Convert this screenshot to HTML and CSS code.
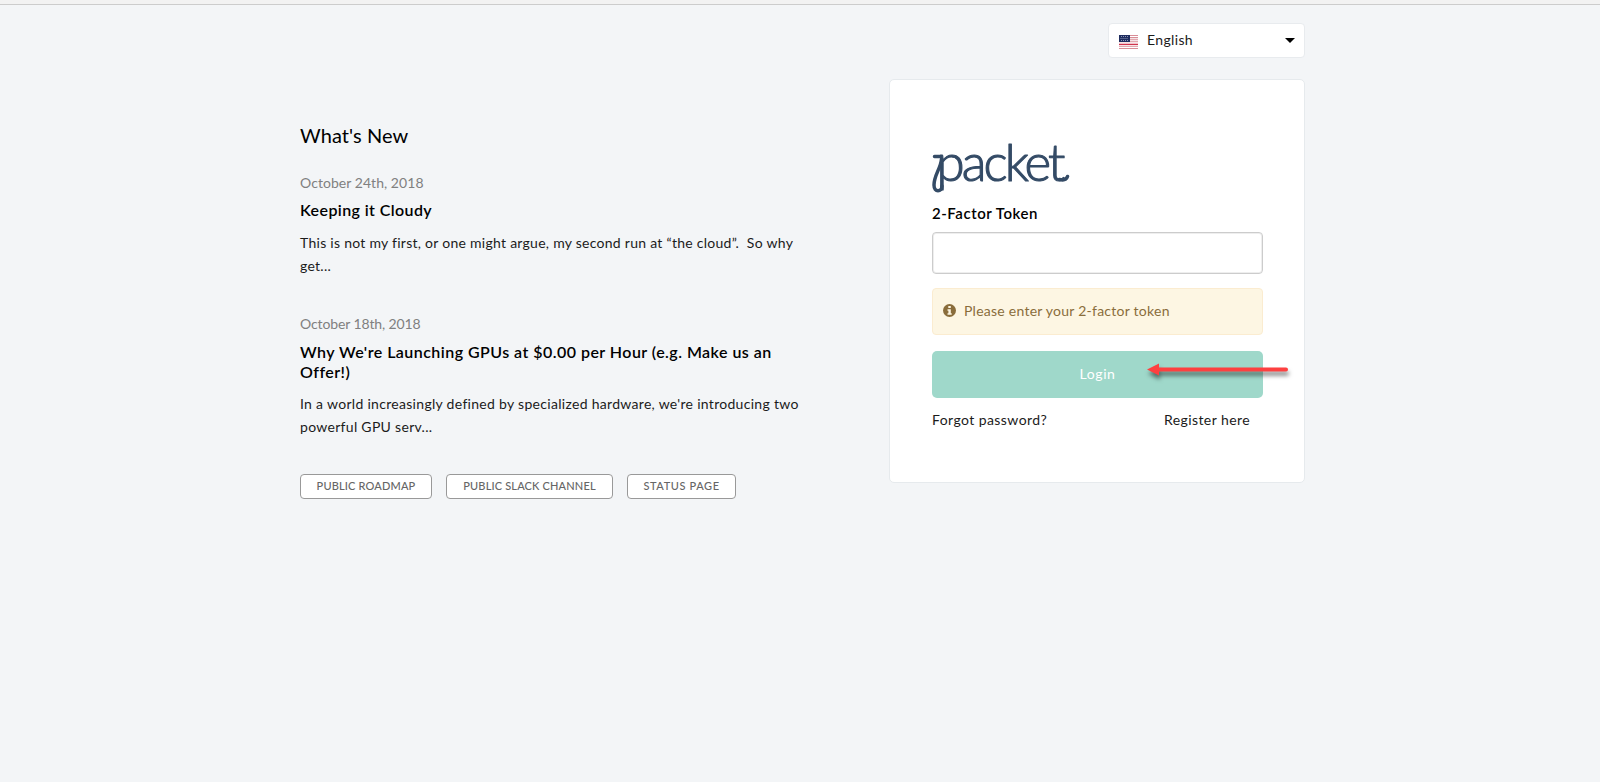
FILE: index.html
```html
<!DOCTYPE html>
<html lang="en">
<head>
<meta charset="utf-8">
<title>Packet - Login</title>
<link rel="stylesheet" href="styles.css">
</head>
<body>
<div class="topbar"></div>
<div class="page">
  <section class="news">
    <h1 class="news-title">What's New</h1>
    <article class="post">
      <div class="post-date">October 24th, 2018</div>
      <h2 class="post-title">Keeping it Cloudy</h2>
      <p class="post-text">This is not my first, or one might argue, my second run at “the cloud”.&nbsp; So why<br>get...</p>
    </article>
    <article class="post second">
      <div class="post-date">October 18th, 2018</div>
      <h2 class="post-title">Why We're Launching GPUs at $0.00 per Hour (e.g. Make us an<br>Offer!)</h2>
      <p class="post-text">In a world increasingly defined by specialized hardware, we're introducing two<br>powerful GPU serv...</p>
    </article>
    <nav class="links">
      <a class="pill roadmap">PUBLIC ROADMAP</a>
      <a class="pill slack">PUBLIC SLACK CHANNEL</a>
      <a class="pill status">STATUS PAGE</a>
    </nav>
  </section>
  <section class="side">
    <div class="language">
      <svg class="flag" viewBox="0 0 19 14">
        <rect width="19" height="14" fill="#fff"/>
        <path d="M0 .5h19M0 2.6h19M0 4.7h19M0 6.8h19M0 11.3h19M0 13.5h19" stroke="#d98d97" stroke-width="1.1"/>
        <path d="M0 9.3h19" stroke="#c8102e" stroke-width="1.1"/>
        <rect width="11" height="7" fill="#1f2d5f"/>
        <path d="M2 1.5h7M1.5 3.5h8M2 5.5h7" stroke="#8b94b5" stroke-dasharray="1 1"/>
      </svg>
      <span class="language-name">English</span>
      <svg class="caret" viewBox="0 0 10 5"><path d="M0 0h10L5 5z"/></svg>
    </div>
    <form class="card">
      <svg class="logo" viewBox="0 0 140 54" role="img" aria-label="packet">
        <text class="logo-text" x="4.500" y="42" textLength="129" lengthAdjust="spacing">packet</text>
        <path class="swash" d="M2.500 17.500h6M9.500 20C9 29 2 36 2 46c0 8 8 7 8 1M127.500 40.500c4 1 7 0 8-3"/>
      </svg>
      <label class="label" for="token">2-Factor Token</label>
      <input class="token" id="token" type="text">
      <div class="alert">
        <svg class="info" viewBox="0 0 13 13"><circle cx="6.500" cy="6.500" r="6.500" fill="#8a6d3b"/><path d="M5.300 2h2.500v2H5.300zM4.500 5.200h3.300v4h.9v1.600H4.500V9.200h.9V6.800h-.9z" fill="#fdf6e3"/></svg>
        <span class="alert-text">Please enter your 2-factor token</span>
      </div>
      <div class="login"><span class="login-text">Login</span>
        <svg class="arrow" viewBox="0 0 150 24"><path d="M4 9.500 16 3.500v4h127a2 2 0 0 1 0 4H16v4z" fill="#fd4040"/></svg>
      </div>
      <div class="actions"><a class="forgot">Forgot password?</a><a class="register">Register here</a></div>
    </form>
  </section>
</div>
</body>
</html>
```
FILE: styles.css
```css
* { box-sizing: border-box; }
body { margin: 0; height: 782px; overflow: hidden; background: #f3f5f7; color: #1b1b1b; font: 14px/20px Lato, sans-serif; white-space: nowrap; }
.topbar { height: 5px; background: #f2f2f2; border-bottom: 1px solid #ccc; }
.page { display: flex; justify-content: space-between; width: 1005px; margin-left: 300px; }
.news { width: 515px; padding-top: 116px; }
h1, h2, p { margin: 0; }
.news-title { font-size: 20px; line-height: 28px; font-weight: 400; color: #000; letter-spacing: .08px; }
.post-date { margin-top: 24px; line-height: 20px; color: #808080; font-size: 14px; letter-spacing: .05px; }
.post-title { margin-top: 7px; font-size: 16px; line-height: 20px; font-weight: 600; color: #000; letter-spacing: .4px; }
.post-text { margin-top: 11px; font-size: 14px; line-height: 23px; letter-spacing: .27px; }
.second .post-date { margin-top: 37px; letter-spacing: -.12px; }
.second .post-title { margin-top: 8px; letter-spacing: .46px; }
.second .post-text { margin-top: 10px; letter-spacing: .3px; }
.links { display: flex; gap: 14px; margin-top: 36px; }
.pill { display: flex; align-items: center; justify-content: center; height: 25px; padding-bottom: 1px; background: #fff; border: 1px solid #999; border-radius: 4px; color: #666; font-size: 11px; font-weight: 500; letter-spacing: .16px; }
.roadmap { width: 132px; }
.slack { width: 167px; }
.status { width: 109px; letter-spacing: .6px; }
.side { display: flex; flex-direction: column; align-items: flex-end; width: 416px; padding-top: 18px; }
.language { display: flex; align-items: center; width: 197px; height: 35px; padding: 0 11px 0 10px; background: #fff; border: 1px solid #e8ebee; border-radius: 4px; }
.flag { width: 19px; height: 14px; margin-top: 2px; }
.language-name { margin: -2px 0 0 9px; flex: 1; letter-spacing: .35px; }
.caret { width: 10px; height: 5px; margin-right: -2px; }
.card { width: 416px; height: 404px; margin-top: 21px; padding: 59px 41px 0 42px; background: #fff; border: 1px solid #e6eaed; border-radius: 5px; }
.logo { display: block; width: 140px; height: 54px; overflow: visible; }
.logo-text { font-family: Lato, sans-serif; font-weight: 300; font-size: 51px; fill: #344b66; stroke: #344b66; stroke-width: 1.1px; stroke-linejoin: round; }
.swash { fill: none; stroke: #344b66; stroke-width: 3.500; stroke-linecap: round; }
.label { display: block; margin-top: 10px; font-size: 15px; line-height: 20px; font-weight: 600; color: #000; letter-spacing: .54px; }
.token { display: block; width: 331px; height: 42px; margin-top: 9px; border: 1px solid #ccc; border-radius: 4px; box-shadow: inset 0 0 0 1px #eee; }
.alert { display: flex; align-items: center; width: 331px; height: 47px; margin-top: 14px; padding-left: 10px; background: #fdf6e3; border: 1px solid #fbecd0; border-radius: 4px; color: #8a6d3b; }
.info { width: 13px; height: 13px; margin-top: -2px; }
.alert-text { margin: -2px 0 0 8px; letter-spacing: .25px; }
.login { position: relative; display: flex; align-items: center; justify-content: center; width: 331px; height: 47px; margin-top: 16px; border-radius: 5px; background: #9fd8ca; color: #fff; }
.login-text { margin-top: -1px; letter-spacing: .6px; }
.arrow { position: absolute; left: 211px; top: 9px; width: 150px; height: 24px; overflow: visible; filter: drop-shadow(1px 4px 2px rgba(0,0,0,.5)); }
.actions { display: flex; justify-content: space-between; width: 318px; margin-top: 12px; letter-spacing: .42px; }
```
